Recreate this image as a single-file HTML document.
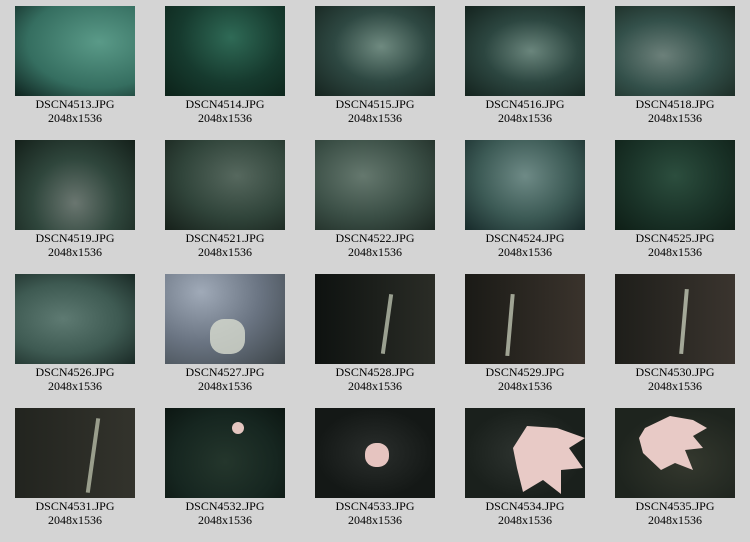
<!DOCTYPE html>
<html><head><meta charset="utf-8"><style>
body{margin:0;width:750px;height:542px;background:#d4d4d4;position:relative;overflow:hidden;font-family:"Liberation Serif",serif;}
.c{position:absolute;width:150px;text-align:center;font-size:12px;line-height:14px;color:#000;}
.t{width:120px;height:90px;margin:0 auto 1px;position:relative;overflow:hidden;}
.c div.l{height:14px}
</style></head><body>
<div class="c" style="left:0;top:6px"><div class="t" style="background:radial-gradient(ellipse at 70% 40%,#5a9a88,#356e60 60%,#0e221e)"></div><div class="l">DSCN4513.JPG</div><div class="l">2048x1536</div></div>
<div class="c" style="left:150px;top:6px"><div class="t" style="background:radial-gradient(ellipse at 55% 35%,#2f6a56,#163a2e 55%,#0c2219)"></div><div class="l">DSCN4514.JPG</div><div class="l">2048x1536</div></div>
<div class="c" style="left:300px;top:6px"><div class="t" style="background:radial-gradient(ellipse at 55% 45%,#6f8a80,#2e4842 50%,#16241f)"></div><div class="l">DSCN4515.JPG</div><div class="l">2048x1536</div></div>
<div class="c" style="left:450px;top:6px"><div class="t" style="background:radial-gradient(ellipse at 55% 50%,#6a857c,#2c4640 50%,#14231e)"></div><div class="l">DSCN4516.JPG</div><div class="l">2048x1536</div></div>
<div class="c" style="left:600px;top:6px"><div class="t" style="background:radial-gradient(ellipse at 40% 55%,#6c807a,#33504a 50%,#18261f)"></div><div class="l">DSCN4518.JPG</div><div class="l">2048x1536</div></div>

<div class="c" style="left:0;top:140px"><div class="t" style="background:radial-gradient(ellipse at 50% 70%,#6a7670,#2f463c 50%,#14201a)"></div><div class="l">DSCN4519.JPG</div><div class="l">2048x1536</div></div>
<div class="c" style="left:150px;top:140px"><div class="t" style="background:radial-gradient(ellipse at 60% 40%,#56685e,#30443a 55%,#16201a)"></div><div class="l">DSCN4521.JPG</div><div class="l">2048x1536</div></div>
<div class="c" style="left:300px;top:140px"><div class="t" style="background:radial-gradient(ellipse at 40% 40%,#65786e,#3a4e45 55%,#1c2822)"></div><div class="l">DSCN4522.JPG</div><div class="l">2048x1536</div></div>
<div class="c" style="left:450px;top:140px"><div class="t" style="background:radial-gradient(ellipse at 50% 40%,#6e8a86,#3c5a55 55%,#172a2a)"></div><div class="l">DSCN4524.JPG</div><div class="l">2048x1536</div></div>
<div class="c" style="left:600px;top:140px"><div class="t" style="background:radial-gradient(ellipse at 50% 40%,#2c4e3e,#1a3328 55%,#0e1e16)"></div><div class="l">DSCN4525.JPG</div><div class="l">2048x1536</div></div>

<div class="c" style="left:0;top:274px"><div class="t" style="background:radial-gradient(ellipse at 40% 50%,#5e7a72,#3e5a52 55%,#1a2a26)"></div><div class="l">DSCN4526.JPG</div><div class="l">2048x1536</div></div>
<div class="c" style="left:150px;top:274px"><div class="t" style="background:radial-gradient(ellipse at 30% 20%,#a0aab8,#6a7482 50%,#3c4448)"><div style="position:absolute;left:45px;top:45px;width:35px;height:35px;background:#d8dcd0;border-radius:40%;opacity:.8"></div></div><div class="l">DSCN4527.JPG</div><div class="l">2048x1536</div></div>
<div class="c" style="left:300px;top:274px"><div class="t" style="background:linear-gradient(90deg,#0e1210,#2a2c26)"><div style="position:absolute;left:70px;top:20px;width:4px;height:60px;background:#9aa090;transform:rotate(8deg)"></div></div><div class="l">DSCN4528.JPG</div><div class="l">2048x1536</div></div>
<div class="c" style="left:450px;top:274px"><div class="t" style="background:linear-gradient(90deg,#1a1a16,#3a332c)"><div style="position:absolute;left:43px;top:20px;width:4px;height:62px;background:#a0a494;transform:rotate(5deg)"></div></div><div class="l">DSCN4529.JPG</div><div class="l">2048x1536</div></div>
<div class="c" style="left:600px;top:274px"><div class="t" style="background:linear-gradient(90deg,#1e1e1a,#3a342e)"><div style="position:absolute;left:67px;top:15px;width:4px;height:65px;background:#a4a898;transform:rotate(5deg)"></div></div><div class="l">DSCN4530.JPG</div><div class="l">2048x1536</div></div>

<div class="c" style="left:0;top:408px"><div class="t" style="background:linear-gradient(90deg,#22241f,#33332c)"><div style="position:absolute;left:76px;top:10px;width:4px;height:75px;background:#9a9e8c;transform:rotate(8deg)"></div></div><div class="l">DSCN4531.JPG</div><div class="l">2048x1536</div></div>
<div class="c" style="left:150px;top:408px"><div class="t" style="background:radial-gradient(ellipse at 50% 60%,#24362c,#162620 60%,#0c1612)"><div style="position:absolute;left:67px;top:14px;width:12px;height:12px;background:#e4c6c0;border-radius:50%"></div></div><div class="l">DSCN4532.JPG</div><div class="l">2048x1536</div></div>
<div class="c" style="left:300px;top:408px"><div class="t" style="background:radial-gradient(ellipse at 50% 50%,#2a2e2c,#141816 70%)"><div style="position:absolute;left:50px;top:35px;width:24px;height:24px;background:#e6c4c0;border-radius:45%"></div></div><div class="l">DSCN4533.JPG</div><div class="l">2048x1536</div></div>
<div class="c" style="left:450px;top:408px"><div class="t" style="background:radial-gradient(ellipse at 50% 50%,#2e3430,#1a201c 70%)"><svg width="120" height="90" style="position:absolute;left:0;top:0"><polygon points="62,18 92,20 120,30 104,40 118,60 96,62 96,86 78,72 58,84 52,60 48,40" fill="#e8cac6"/></svg></div><div class="l">DSCN4534.JPG</div><div class="l">2048x1536</div></div>
<div class="c" style="left:600px;top:408px"><div class="t" style="background:radial-gradient(ellipse at 60% 60%,#34382e,#1e241e 70%)"><svg width="120" height="90" style="position:absolute;left:0;top:0"><polygon points="30,20 55,8 78,12 92,20 78,28 88,40 70,42 78,62 60,55 46,62 28,45 24,30" fill="#e8cac6"/></svg></div><div class="l">DSCN4535.JPG</div><div class="l">2048x1536</div></div>
</body></html>
